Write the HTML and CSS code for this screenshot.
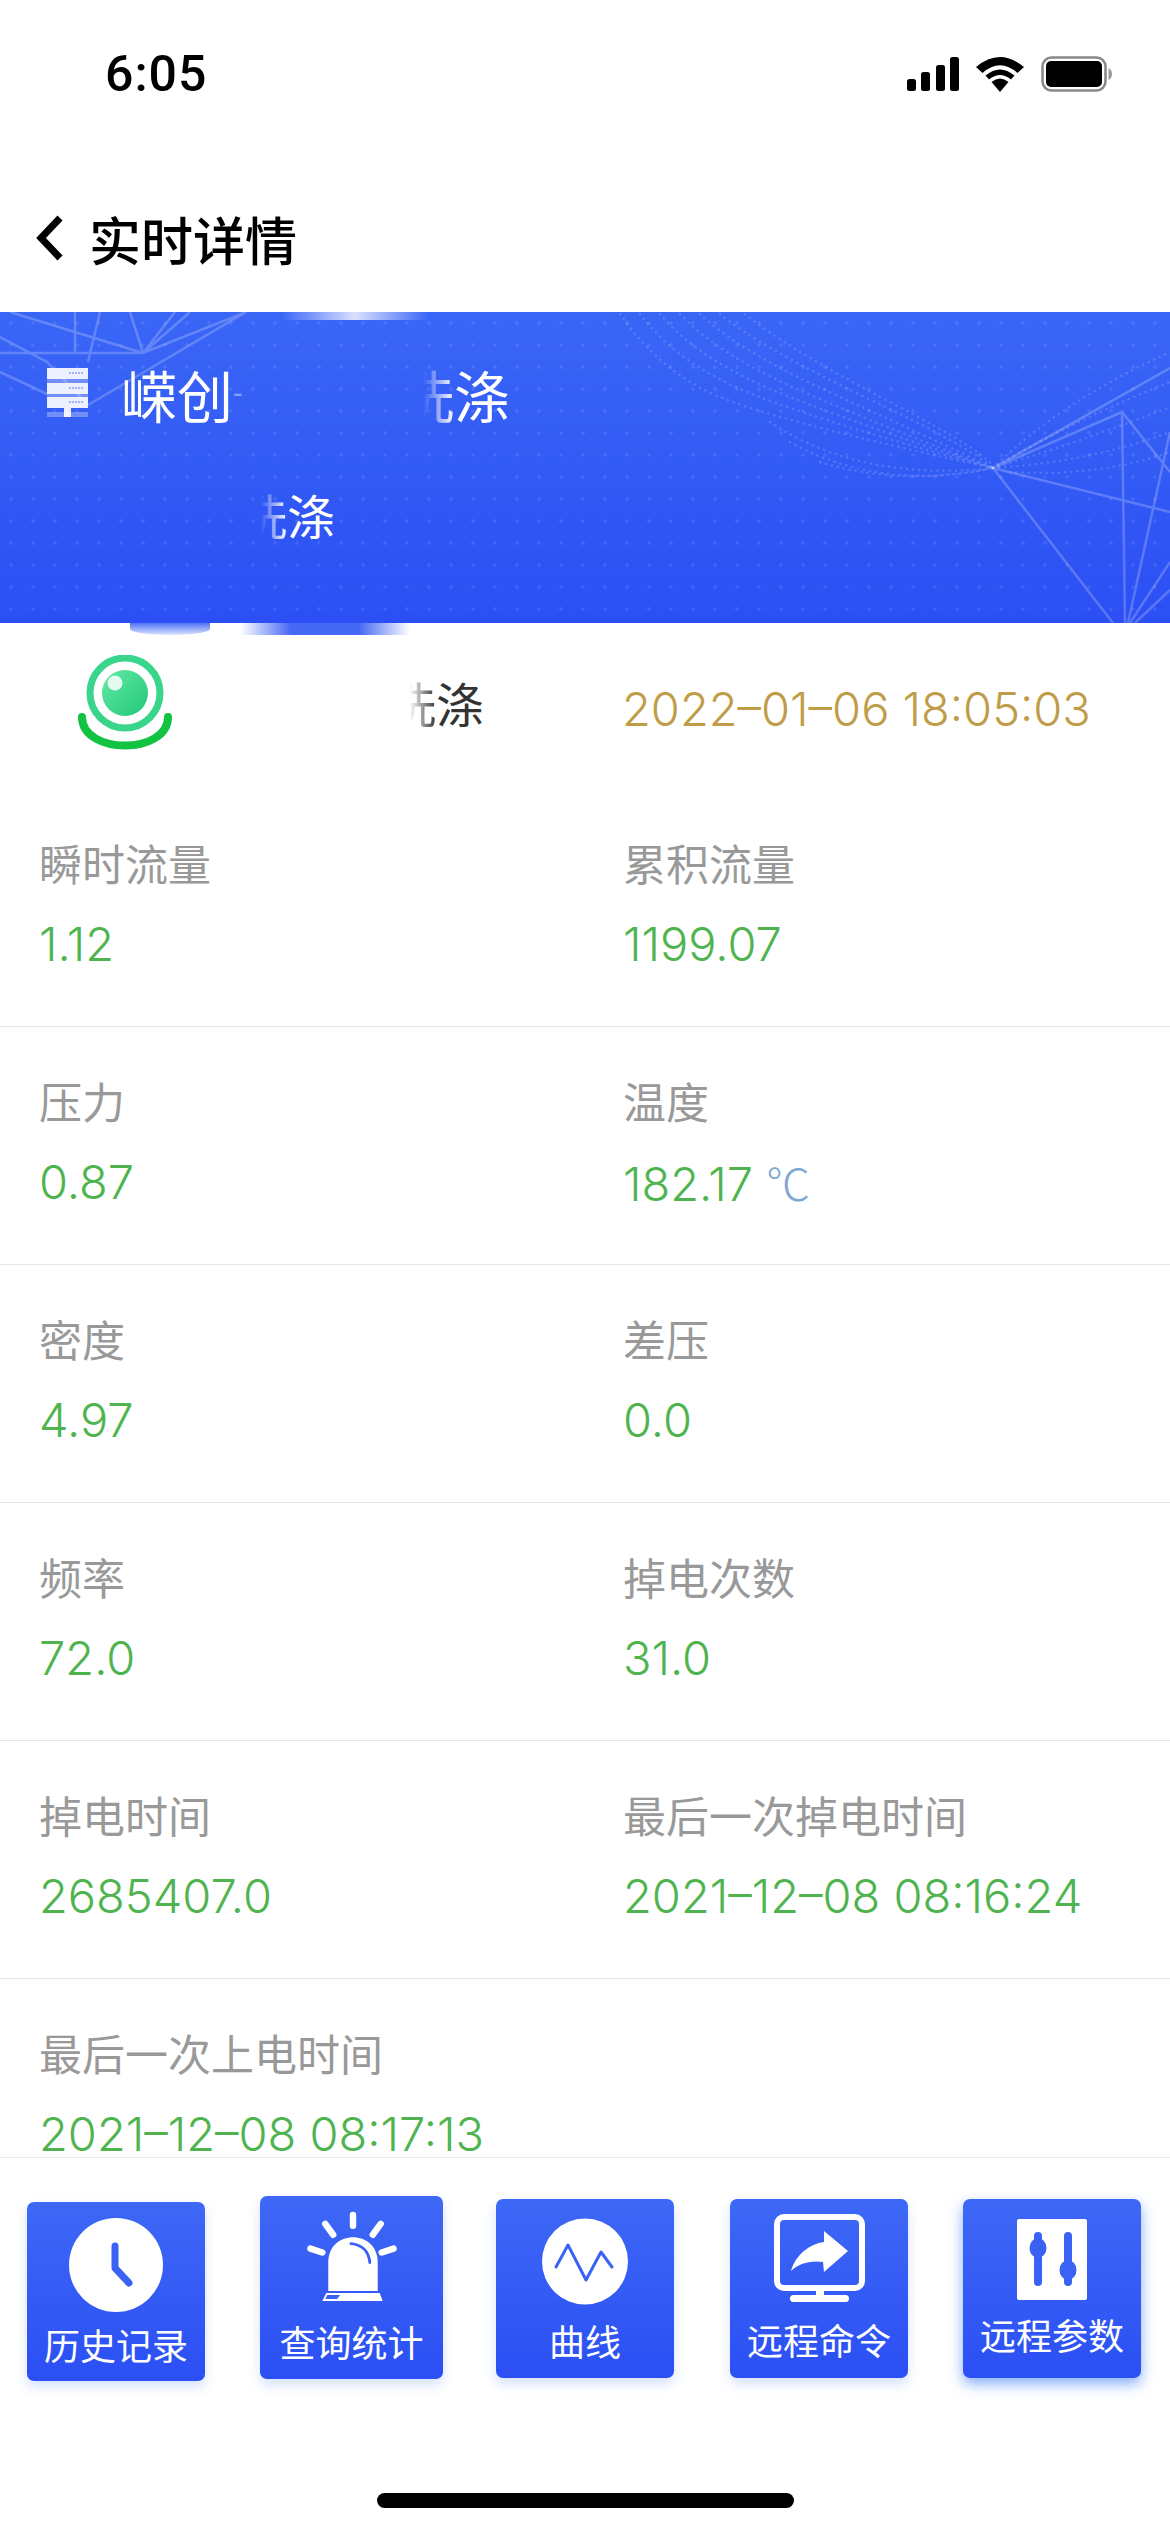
FILE: index.html
```html
<!DOCTYPE html>
<html>
  <head>
    <title>实时详情</title>
    <link rel="stylesheet" href="styles.css">
  </head>
  <body>
    <div id="page">
      <div class="status-bar">
        <span class="status-time">6:05</span>
        <div class="status-icons">
          <svg class="icon-signal" viewBox="0 0 52 34">
            <rect x="0" y="22" width="9" height="12" rx="2.5" />
            <rect x="14" y="15" width="9" height="19" rx="2.5" />
            <rect x="29" y="8" width="9" height="26" rx="2.5" />
            <rect x="43" y="0" width="9" height="34" rx="2.5" />
          </svg>
          <svg class="icon-wifi" viewBox="0 0 50 36">
            <path d="M25 36 L16.5 26 Q25 19 33.5 26 Z" />
            <path d="M10.500 19.500 L14 23.500 Q25 14.500 36 23.500 L39.500 19.500 Q25 7.500 10.500 19.500 Z" />
            <path d="M1 11 L7.500 17 Q25 1.500 42.500 17 L49 11 Q25 -9 1 11 Z" />
          </svg>
          <svg class="icon-battery" viewBox="0 0 71 36">
            <rect x="1.500" y="1.500" width="63" height="33" rx="9" fill="none" stroke="#888" stroke-width="2.500" />
            <rect x="5" y="5" width="56" height="26" rx="5" />
            <path d="M67.500 12 Q71 14 71 18 Q71 22 67.500 24 Z" fill="#999" />
          </svg>
        </div>
      </div>

      <div class="nav-bar">
        <svg class="icon-back" viewBox="0 0 28 48">
          <path d="M24 4 L5 24 L24 44" />
        </svg>
        <span class="nav-title">实时详情</span>
      </div>

      <div class="banner">
        <svg class="banner-art" viewBox="0 0 1170 311">
          <g class="net-lines">
            <path d="M0 41 L143 41 L246 0 M10 0 L143 41 M75 0 L75 41 M100 0 L88 50 M143 41 L130 0 M143 41 L175 0 M0 25 L47 50 L88 93 L246 0 M0 60 L47 82 M143 41 L190 0" />
            <path d="M993 156 L1170 56 M993 156 L1122 100 L1125 311 M993 156 L1170 200 M993 156 L1113 311 M1170 120 L1128 311 M1122 100 L1170 160 M1170 250 L1130 311 M1170 278 L1135 311" />
          </g>
          <g class="net-dots">
            <path d="M620 2 Q660 60 720 85 T993 156" />
            <path d="M640 2 Q680 55 760 85 T993 156" />
            <path d="M660 2 Q700 50 790 85 T993 156" />
            <path d="M680 2 Q720 45 815 85 T993 156" />
            <path d="M700 2 Q740 40 840 85 T993 156" />
            <path d="M720 2 Q760 35 865 85 T993 156" />
            <path d="M745 2 Q785 35 890 90 T993 156" />
            <path d="M770 110 Q860 170 993 156" />
            <path d="M790 130 Q880 180 993 156" />
            <path d="M820 150 Q900 175 993 156" />
            <path d="M993 156 Q1060 90 1170 40" />
            <path d="M993 156 Q1070 110 1170 70" />
            <path d="M993 156 Q1080 130 1170 95" />
            <path d="M993 156 Q1090 150 1170 120" />
            <path d="M1010 160 Q1100 165 1170 140" />
          </g>
        </svg>
        <span class="smudge smudge-top"></span>
        <div class="banner-title">
          <svg class="icon-server" viewBox="0 0 41 50">
            <rect class="server-bar" x="0" y="0" width="41" height="11" />
            <rect class="server-bar" x="0" y="15" width="41" height="11" />
            <rect class="server-bar" x="0" y="29" width="41" height="11" />
            <rect class="server-gap" x="0" y="11" width="41" height="4" />
            <rect class="server-gap" x="0" y="26" width="41" height="3" />
            <rect class="server-gap" x="0" y="44" width="41" height="5" />
            <rect class="server-bar" x="17" y="40" width="7" height="9" />
            <path class="server-tick" d="M22 5 L36 5 M22 20 L36 20 M22 34 L36 34" />
          </svg>
          <span>嵘创</span>
          <span class="banner-dash">-</span>
          <span class="fade-char">洗</span><span>涤</span>
        </div>
        <div class="banner-sub">
          <span class="fade-char">洗</span><span>涤</span>
        </div>
      </div>

      <div class="device-row">
        <span class="smudge smudge-left"></span>
        <span class="smudge smudge-right"></span>
        <svg class="icon-device" viewBox="0 0 96 96">
          <defs>
            <linearGradient id="lens" x1="0" y1="0" x2="1" y2="1">
              <stop offset="0" stop-color="#63eba6" />
              <stop offset="1" stop-color="#22c678" />
            </linearGradient>
          </defs>
          <circle cx="47" cy="38" r="35" fill="none" stroke="#38d58a" stroke-width="7" />
          <circle cx="47" cy="38" r="23" fill="url(#lens)" />
          <circle cx="37" cy="28" r="7.500" fill="#e4fbef" />
          <path d="M4 62 C4 100 90 100 90 62" fill="none" stroke="#12c241" stroke-width="8" stroke-linecap="round" />
        </svg>
        <span class="device-name"><span class="fade-char">洗</span>涤</span>
        <span class="device-time">2022–01–06 18:05:03</span>
      </div>

      <div class="metrics">
        <div class="metric-row">
          <div class="metric">
            <div class="metric-label">瞬时流量</div>
            <div class="metric-value">1.12</div>
          </div>
          <div class="metric">
            <div class="metric-label">累积流量</div>
            <div class="metric-value">1199.07</div>
          </div>
        </div>
        <div class="metric-row">
          <div class="metric">
            <div class="metric-label">压力</div>
            <div class="metric-value">0.87</div>
          </div>
          <div class="metric">
            <div class="metric-label">温度</div>
            <div class="metric-value">182.17 <span class="metric-unit">℃</span></div>
          </div>
        </div>
        <div class="metric-row">
          <div class="metric">
            <div class="metric-label">密度</div>
            <div class="metric-value">4.97</div>
          </div>
          <div class="metric">
            <div class="metric-label">差压</div>
            <div class="metric-value">0.0</div>
          </div>
        </div>
        <div class="metric-row">
          <div class="metric">
            <div class="metric-label">频率</div>
            <div class="metric-value">72.0</div>
          </div>
          <div class="metric">
            <div class="metric-label">掉电次数</div>
            <div class="metric-value">31.0</div>
          </div>
        </div>
        <div class="metric-row">
          <div class="metric">
            <div class="metric-label">掉电时间</div>
            <div class="metric-value">2685407.0</div>
          </div>
          <div class="metric">
            <div class="metric-label">最后一次掉电时间</div>
            <div class="metric-value">2021–12–08 08:16:24</div>
          </div>
        </div>
        <div class="metric-row">
          <div class="metric">
            <div class="metric-label">最后一次上电时间</div>
            <div class="metric-value">2021–12–08 08:17:13</div>
          </div>
        </div>
      </div>

      <div class="footer">
        <div class="tool-row">
          <div class="tool tool-history">
            <svg class="tool-icon" viewBox="0 0 94 94">
              <circle cx="47" cy="47" r="47" fill="#fff" />
              <path d="M46 28 L46 50 L60 65" fill="none" stroke="#3a62f5" stroke-width="7" stroke-linecap="round" stroke-linejoin="round" />
            </svg>
            <span class="tool-label">历史记录</span>
          </div>
          <div class="tool tool-query">
            <svg class="tool-icon" viewBox="0 0 92 92">
              <path d="M22 81 L22 52 C22 18 72 18 72 52 L72 81 Z" fill="#fff" />
              <path d="M45 33 C56 34 63 41 64 52" fill="none" stroke="#3a62f5" stroke-width="3" stroke-linecap="round" />
              <path d="M20 83 L74 83 L77 91 L16 91 Z" fill="#fff" />
              <path d="M21 85 L34 85 L31 89 L19 89 Z" fill="#3a62f5" />
              <g stroke="#fff" stroke-width="6.500" stroke-linecap="round">
                <path d="M47 4 L47 15" />
                <path d="M19 13 L27 24" />
                <path d="M75 13 L67 24" />
                <path d="M4 38 L16 42" />
                <path d="M88 38 L76 42" />
              </g>
            </svg>
            <span class="tool-label">查询统计</span>
          </div>
          <div class="tool tool-curve">
            <svg class="tool-icon" viewBox="0 0 86 87">
              <circle cx="43" cy="43.500" r="43" fill="#fff" />
              <path d="M14 49 L26 27 L44 62 L59 34 L70 49" fill="none" stroke="#3a62f5" stroke-width="3" stroke-linejoin="round" stroke-linecap="round" />
            </svg>
            <span class="tool-label">曲线</span>
          </div>
          <div class="tool tool-remote">
            <svg class="tool-icon" viewBox="0 0 91 88">
              <rect x="3" y="3" width="85" height="71" rx="7" fill="none" stroke="#fff" stroke-width="6" />
              <rect x="42" y="76" width="8" height="8" fill="#fff" />
              <rect x="16" y="81" width="59" height="7" rx="3.500" fill="#fff" />
              <path d="M50 17 L74 37 L50 58 L49 48 C36 46 24 50 17 57 C22 40 36 30 50 28 Z" fill="#fff" />
            </svg>
            <span class="tool-label">远程命令</span>
          </div>
          <div class="tool tool-param">
            <svg class="tool-icon" viewBox="0 0 70 81">
              <rect x="0" y="0" width="70" height="81" rx="2" fill="#fff" />
              <g fill="#3a62f5">
                <rect x="17" y="13" width="8" height="54" rx="4" />
                <rect x="47" y="13" width="8" height="54" rx="4" />
                <ellipse cx="21" cy="29" rx="8.500" ry="10" />
                <ellipse cx="51" cy="51" rx="8.500" ry="10" />
              </g>
            </svg>
            <span class="tool-label">远程参数</span>
          </div>
        </div>
        <div class="home-bar"></div>
      </div>
    </div>
  </body>
</html>
```

FILE: styles.css
```css
* {
  box-sizing: border-box;
}

body {
  margin: 0;
  background-color: #fff;
  font-family: "Liberation Sans", "Noto Sans CJK SC", sans-serif;
}

#page {
  display: flex;
  flex-direction: column;
  width: 1170px;
  height: 2532px;
  overflow: hidden;
}

/* status bar */
.status-bar {
  display: flex;
  justify-content: space-between;
  align-items: center;
  flex-shrink: 0;
  height: 110px;
  padding: 38px 58px 0 105px;
}

.status-time {
  font-family: Roboto, sans-serif;
  font-size: 50px;
  font-weight: 500;
  letter-spacing: 1px;
  color: #000;
}

.status-icons {
  display: flex;
  align-items: center;
  gap: 16px;
}

.icon-signal {
  width: 52px;
  height: 34px;
}

.icon-wifi {
  width: 50px;
  height: 36px;
}

.icon-battery {
  width: 71px;
  height: 36px;
}

/* nav */
.nav-bar {
  display: flex;
  align-items: center;
  flex-shrink: 0;
  gap: 25px;
  height: 202px;
  padding: 54px 0 0 36px;
}

.icon-back {
  width: 28px;
  height: 48px;
  fill: none;
  stroke: #000;
  stroke-width: 7;
}

.nav-title {
  font-size: 52px;
  font-weight: 500;
  color: #000;
}

/* banner */
.banner {
  position: relative;
  flex-shrink: 0;
  height: 311px;
  padding: 50px 0 0 47px;
  background-color: #3358f5;
  background-image: radial-gradient(rgba(255, 255, 255, 0.09) 1.5px, transparent 2px), linear-gradient(180deg, #3a66f6 0%, #2b4ff4 100%);
  background-size: 22px 22px, 100% 100%;
  color: #fff;
}

.banner-art {
  position: absolute;
  top: 0;
  left: 0;
  width: 1170px;
  height: 311px;
}

.net-lines path {
  fill: none;
  stroke: rgba(255, 255, 255, 0.22);
  stroke-width: 2.5;
}

.net-dots path {
  fill: none;
  stroke: rgba(255, 255, 255, 0.16);
  stroke-width: 2.5;
  stroke-linecap: round;
  stroke-dasharray: 0.1 6;
}

.banner-title {
  position: relative;
  display: flex;
  align-items: center;
  height: 62px;
  font-size: 56px;
}

.icon-server {
  width: 41px;
  height: 50px;
  margin-right: 33px;
}

.server-bar {
  fill: rgba(255, 255, 255, 0.9);
}

.server-gap {
  fill: rgba(255, 255, 255, 0.3);
}

.server-tick {
  fill: none;
  stroke: #9fb4f8;
  stroke-width: 2;
  stroke-dasharray: 2 1;
}

.banner-dash {
  width: 165px;
  font-size: 30px;
  opacity: 0.4;
}

.fade-char {
  -webkit-mask-image: linear-gradient(90deg, transparent 45%, #000 100%);
  mask-image: linear-gradient(90deg, transparent 45%, #000 100%);
}

.banner-sub {
  position: relative;
  display: flex;
  margin: 64px 0 0 192px;
  font-size: 48px;
  line-height: 62px;
}

.smudge {
  position: absolute;
}

.smudge-top {
  top: 0;
  left: 282px;
  width: 146px;
  height: 8px;
  background: linear-gradient(90deg, transparent, rgba(255, 255, 255, 0.8) 50%, transparent);
}

.smudge-left {
  top: 0;
  left: 130px;
  width: 80px;
  height: 12px;
  border-radius: 0 0 50% 50%;
  background: linear-gradient(180deg, #4f73f5, rgba(120, 150, 246, 0.25));
}

.smudge-right {
  top: 0;
  left: 240px;
  width: 170px;
  height: 12px;
  background: linear-gradient(90deg, transparent, #4568f5 30%, #4568f5 70%, transparent);
}

/* device row */
.device-row {
  position: relative;
  display: flex;
  align-items: center;
  flex-shrink: 0;
  height: 166px;
  padding-left: 78px;
  overflow: hidden;
}

.icon-device {
  width: 96px;
  height: 96px;
  margin: -6px 214px 0 0;
}

.device-name {
  width: 234px;
  margin-top: -8px;
  font-size: 48px;
  color: #333;
}

.device-time {
  margin-top: 4px;
  font-family: Inter, sans-serif;
  font-size: 47px;
  font-weight: 300;
  color: #bf9d48;
  white-space: nowrap;
}

/* metrics */
.metrics {
  flex: 1;
  min-height: 0;
}

.metric-row {
  display: grid;
  grid-template-columns: 584px 1fr;
  height: 238px;
  padding: 52px 0 0 39px;
  border-bottom: 1px solid #e6e6e6;
}

.metric-row:last-child {
  height: 180px;
  border-bottom: none;
}

.metric-label {
  height: 50px;
  font-size: 43px;
  line-height: 50px;
  color: #999;
}

.metric-value {
  height: 52px;
  margin-top: 27px;
  font-family: Inter, sans-serif;
  font-size: 47px;
  font-weight: 300;
  line-height: 52px;
  color: #4fb44f;
  white-space: nowrap;
}

.metric-unit {
  font-family: "Noto Sans CJK SC", sans-serif;
  font-size: 44px;
  color: #7fa9d4;
}

/* footer */
.footer {
  flex-shrink: 0;
  height: 375px;
  border-top: 1px solid #e8e8e8;
}

.tool-row {
  display: flex;
  align-items: flex-start;
  gap: 55px;
  height: 185px;
  margin-top: 38px;
  padding-left: 27px;
}

.tool {
  display: flex;
  flex-direction: column;
  align-items: center;
  flex-shrink: 0;
  width: 178px;
  height: 179px;
  border-radius: 7px;
  background: linear-gradient(180deg, #3e68f6 0%, #2b4ff4 100%);
  box-shadow: 0 6px 12px rgba(70, 120, 240, 0.22);
}

.tool-label {
  font-size: 36px;
  line-height: 40px;
  color: #fff;
  white-space: nowrap;
}

.tool-history {
  margin-top: 6px;
  padding-top: 16px;
}

.tool-history .tool-icon {
  width: 94px;
  height: 94px;
  margin-bottom: 16px;
}

.tool-query {
  width: 183px;
  height: 183px;
  padding-top: 15px;
}

.tool-query .tool-icon {
  width: 92px;
  height: 91px;
  margin-bottom: 23px;
}

.tool-curve {
  margin: 3px 1px 0 -2px;
  padding-top: 19px;
}

.tool-curve .tool-icon {
  width: 86px;
  height: 87px;
  margin-bottom: 19px;
}

.tool-remote {
  margin-top: 3px;
  padding-top: 15px;
}

.tool-remote .tool-icon {
  width: 91px;
  height: 88px;
  margin-bottom: 21px;
}

.tool-param {
  margin-top: 3px;
  padding-top: 20px;
  box-shadow: 0 6px 14px rgba(50, 120, 245, 0.6);
}

.tool-param .tool-icon {
  width: 70px;
  height: 81px;
  margin-bottom: 18px;
}

.home-bar {
  width: 417px;
  height: 15px;
  margin: 112px 0 0 377px;
  border-radius: 8px;
  background-color: #000;
}
```
